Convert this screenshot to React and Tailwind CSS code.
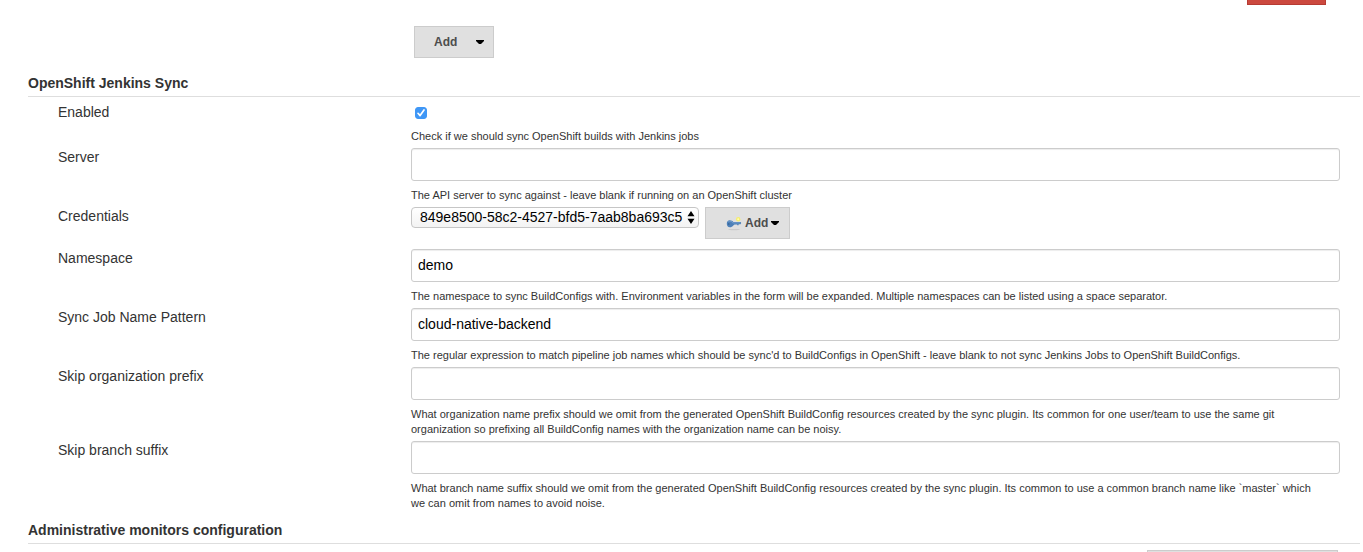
import React from "react";

function Caret() {
  return (
    <svg width="8" height="5" viewBox="0 0 8 5" aria-hidden="true">
      <path d="M0 0h8v1L5 4H3L0 1z" fill="#000" />
    </svg>
  );
}

function KeyIcon() {
  return (
    <svg width="16" height="16" viewBox="0 0 16 16" className="shrink-0" aria-hidden="true">
      <ellipse cx="8" cy="14.6" rx="6" ry="0.7" fill="#cbcbcb" />
      <circle cx="12.2" cy="4.2" r="2.2" fill="#f6ee6c" />
      <circle cx="12.2" cy="4.2" r="1" fill="#fffcb4" />
      <path
        d="M3.6 5.2C5.6 5.2 6.8 6 7.3 7H14.600L15.200 8L14.500 9.300H12.600V10.200H11.200V9.400H8.500L7.300 10.400C6.500 11.600 5.200 12.200 3.800 12.200C1.800 12.200 0.800 10.600 0.800 8.700C0.800 6.600 1.900 5.200 3.600 5.200Z"
        fill="#4d80b8"
      />
      <path d="M2.200 6.800C4 5.800 6 6.200 6.800 7.900H14" stroke="#7ba5d2" strokeWidth="0.8" fill="none" />
      <circle cx="2.800" cy="9" r="0.800" fill="#315a8c" />
    </svg>
  );
}

function SectionHeader({ children }) {
  return (
    <h2 className="mb-1.5 border-b border-[#dedede] pb-1 text-sm leading-[18px] font-bold">{children}</h2>
  );
}

function Row({ id, label, help, children }) {
  return (
    <div className="flex pr-5 pl-[30px]">
      <label htmlFor={id} className="w-[353px] shrink-0 text-sm leading-[18px]">
        {label}
      </label>
      <div className="min-w-0 flex-1">
        {children}
        {help && <p className="mb-1 pt-[7px] pr-5 text-[11px] leading-[15px]">{help}</p>}
      </div>
    </div>
  );
}

function TextRow({ id, label, help, value = "" }) {
  return (
    <Row id={id} label={label} help={help}>
      <input
        id={id}
        type="text"
        defaultValue={value}
        className="block h-[33px] w-full rounded-[3px] border border-[#ccc] bg-white px-1.5 pb-0.5 text-sm text-black shadow-[inset_0_1px_1px_rgba(0,0,0,0.075)]"
      />
    </Row>
  );
}

export default function App() {
  return (
    <main className="h-screen overflow-hidden bg-white pr-[3px] pl-7 font-['Liberation_Sans',Arial,sans-serif] text-[#333]">
      <div className="flex h-[5px] items-end justify-end overflow-hidden pr-[34px]">
        <button type="button" aria-label="Delete" className="h-8 w-[79px] shrink-0 border border-[#b73b33] bg-[#cc493f]" />
      </div>

      <div className="mt-[21px] mb-4 pl-[386px]">
        <button
          type="button"
          className="flex h-8 w-20 items-center justify-between border border-[#ccc] bg-[#e0e0e0] pr-[9px] pl-[19px] text-xs font-bold text-[#4d4d4d]"
        >
          Add
          <Caret />
        </button>
      </div>

      <section>
        <SectionHeader>OpenShift Jenkins Sync</SectionHeader>
        <Row id="enabled" label="Enabled" help="Check if we should sync OpenShift builds with Jenkins jobs">
          <div className="grid h-[19px] pt-1 pl-1">
            <input
              id="enabled"
              type="checkbox"
              defaultChecked
              className="peer col-start-1 row-start-1 h-3 w-3 appearance-none rounded-[3px] border border-[#3f97f6] bg-white checked:bg-[#3f97f6]"
            />
            <svg
              className="pointer-events-none invisible col-start-1 row-start-1 peer-checked:visible"
              width="12"
              height="12"
              viewBox="0 0 12 12"
              aria-hidden="true"
            >
              <path d="M3 6.300l2.100 2.300L9 3" fill="none" stroke="#fff" strokeWidth="1.700" strokeLinecap="round" strokeLinejoin="round" />
            </svg>
          </div>
        </Row>
        <TextRow
          id="server"
          label="Server"
          help="The API server to sync against - leave blank if running on an OpenShift cluster"
        />
        <Row id="credentials" label="Credentials">
          <div className="mb-2.5 flex items-start gap-1.5">
            <div className="relative">
              <select
                id="credentials"
                className="block h-[21px] w-72 appearance-none rounded-[4px] border border-[#c6c6c6] bg-gradient-to-b from-white to-[#f3f3f3] pb-0.5 pl-2 text-sm leading-[18px] text-black"
              >
                <option>849e8500-58c2-4527-bfd5-7aab8ba693c5</option>
              </select>
              <svg
                className="pointer-events-none absolute top-1 right-1"
                width="8"
                height="13"
                viewBox="0 0 8 13"
                aria-hidden="true"
              >
                <path d="M4 0l3.500 5.300H.5zM4 13l3.500-5.300H.5z" fill="#000" />
              </svg>
            </div>
            <button
              type="button"
              className="flex h-8 w-[85px] items-center border border-[#ccc] bg-[#e0e0e0] pl-5 text-xs font-bold text-[#4d4d4d]"
            >
              <KeyIcon />
              <span className="mr-[3px] ml-[3px]">Add</span>
              <Caret />
            </button>
          </div>
        </Row>
        <TextRow
          id="namespace"
          label="Namespace"
          value="demo"
          help="The namespace to sync BuildConfigs with. Environment variables in the form will be expanded. Multiple namespaces can be listed using a space separator."
        />
        <TextRow
          id="pattern"
          label="Sync Job Name Pattern"
          value="cloud-native-backend"
          help="The regular expression to match pipeline job names which should be sync'd to BuildConfigs in OpenShift - leave blank to not sync Jenkins Jobs to OpenShift BuildConfigs."
        />
        <TextRow
          id="org-prefix"
          label="Skip organization prefix"
          help="What organization name prefix should we omit from the generated OpenShift BuildConfig resources created by the sync plugin. Its common for one user/team to use the same git organization so prefixing all BuildConfig names with the organization name can be noisy."
        />
        <TextRow
          id="branch-suffix"
          label="Skip branch suffix"
          help="What branch name suffix should we omit from the generated OpenShift BuildConfig resources created by the sync plugin. Its common to use a common branch name like `master` which we can omit from names to avoid noise."
        />
      </section>

      <section className="mt-1.5">
        <SectionHeader>Administrative monitors configuration</SectionHeader>
        <div className="flex justify-end pr-[22px]">
          <button type="button" aria-label="Administrative monitors" className="h-8 w-[191px] border border-[#ccc] bg-[#e0e0e0]" />
        </div>
      </section>
    </main>
  );
}
